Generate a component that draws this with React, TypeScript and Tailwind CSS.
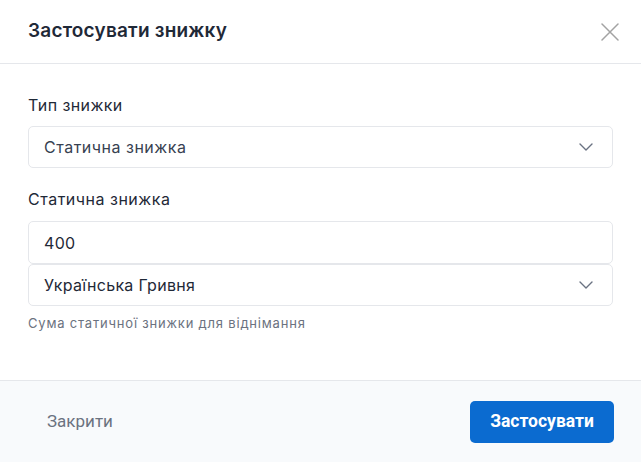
import React from 'react';

const Chevron = () => (
  <svg width="14" height="8" viewBox="0 0 14 8" fill="none" className="text-gray-500">
    <path d="M1 1l6 6 6-6" stroke="currentColor" strokeWidth="1.4" strokeLinecap="round" strokeLinejoin="round" />
  </svg>
);

const App: React.FC = () => {
  return (
    <div className="w-[641px] h-[462px] bg-white flex flex-col" style={{ fontFamily: '"Inter", "Noto Sans", sans-serif' }}>
      {/* Header */}
      <div className="h-[64px] shrink-0 flex items-center justify-between pl-[28px] pr-[22px] border-b border-[#e5e7eb]">
        <h2 className="text-[19px] font-semibold text-[#1f2937] tracking-[0.2px]">Застосувати знижку</h2>
        <button className="text-[#a3a3a3]">
          <svg width="18" height="18" viewBox="0 0 18 18" fill="none">
            <path d="M1 1l16 16M17 1L1 17" stroke="currentColor" strokeWidth="1.5" strokeLinecap="round" />
          </svg>
        </button>
      </div>

      {/* Body */}
      <div className="flex-1 px-[28px] pt-[30px] flex flex-col">
        <label className="text-[16px] text-[#1f2937] leading-[22px] tracking-[0.4px]">Тип знижки</label>
        <div className="mt-[10px] h-[42px] border border-[#e5e7eb] rounded-[5px] flex items-center justify-between pl-[15px] pr-[19px]">
          <span className="text-[16px] text-[#374151] tracking-[0.5px]">Статична знижка</span>
          <Chevron />
        </div>

        <label className="mt-[20px] text-[16px] text-[#1f2937] leading-[22px] tracking-[0.5px]">Статична знижка</label>
        <div className="mt-[11px] h-[43px] border border-[#e5e7eb] rounded-[5px] flex items-center pl-[15px]">
          <span className="text-[16px] text-[#1f2937] tracking-[0.3px]">400</span>
        </div>
        <div className="h-[42px] border border-[#e5e7eb] rounded-[5px] flex items-center justify-between pl-[15px] pr-[19px]">
          <span className="text-[16px] text-[#1f2937] tracking-[0.3px]">Українська Гривня</span>
          <Chevron />
        </div>
        <p className="mt-[8px] text-[13px] text-[#6b7280] tracking-[0.8px]">Сума статичної знижки для віднімання</p>
      </div>

      {/* Footer */}
      <div className="h-[82px] shrink-0 bg-[#f8fafc] border-t border-[#e5e7eb] flex items-center justify-between pl-[47px] pr-[27px]" style={{ fontFamily: 'Roboto, "Noto Sans", sans-serif' }}>
        <button className="text-[17px] text-[#6b7280]">Закрити</button>
        <button className="w-[144px] h-[42px] rounded-[5px] bg-[#0b6bd0] text-white text-[17.5px] font-bold">Застосувати</button>
      </div>
    </div>
  );
};

export default App;
